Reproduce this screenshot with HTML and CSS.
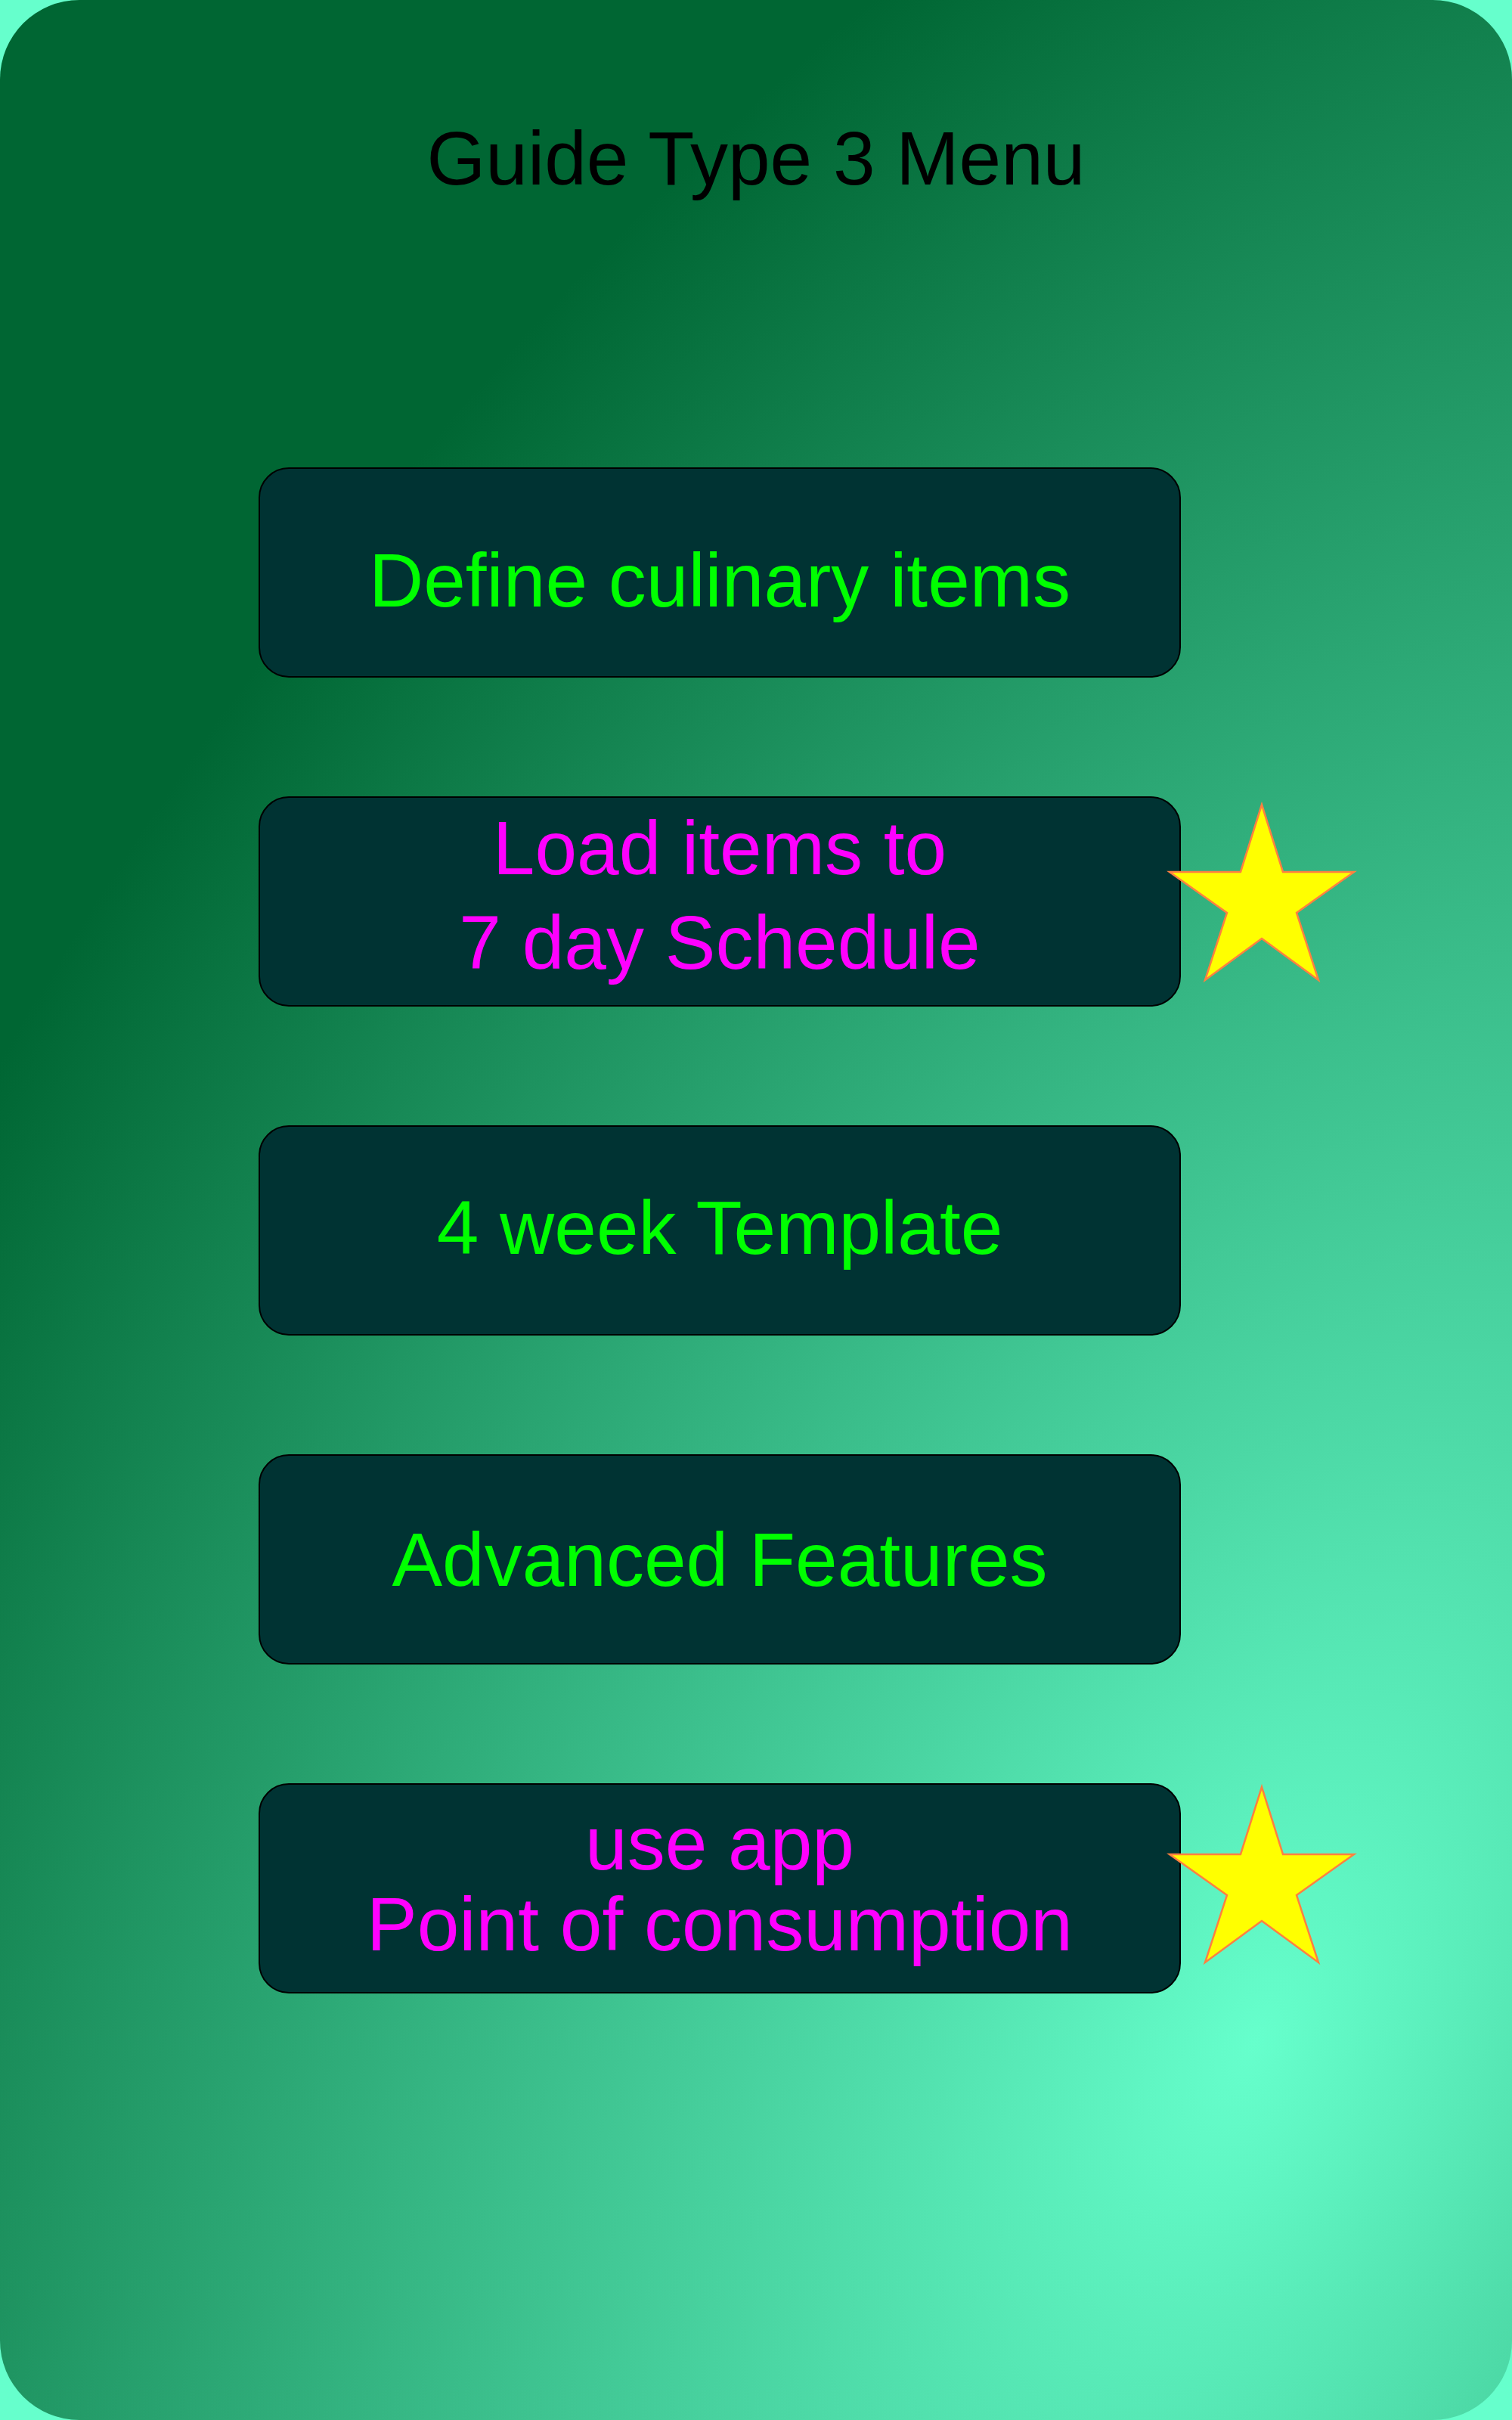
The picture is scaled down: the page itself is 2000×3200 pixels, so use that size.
FILE: index.html
```html
<!DOCTYPE html>
<html lang="en">
<head>
<meta charset="utf-8">
<title>Guide Type 3 Menu</title>
<link rel="stylesheet" href="styles.css">
</head>
<body>
<main class="card">
  <svg class="bg" viewBox="0 0 2000 3200" preserveAspectRatio="none" aria-hidden="true">
    <defs>
      <radialGradient id="glow" gradientUnits="userSpaceOnUse" cx="0" cy="0" r="1" gradientTransform="translate(1660 2700) rotate(26) scale(2077 3590)">
        <stop offset="0" stop-color="#66ffcc"/>
        <stop offset="1" stop-color="#006633"/>
      </radialGradient>
    </defs>
    <rect x="0" y="0" width="2000" height="3200" fill="url(#glow)"/>
  </svg>
  <div class="content">
    <h1 class="title">Guide Type 3 Menu</h1>
    <ul class="menu">
      <li class="item">
        <div class="btn btn--green btn--low">Define culinary items</div>
      </li>
      <li class="item">
        <div class="btn btn--magenta btn--two">Load items to<br>7 day Schedule</div>
        <svg class="star star--a" viewBox="0 0 244 232" aria-hidden="true"><polygon points="122,0 150,89 244,89 168,143 197,232 122,177 47,232 76,143 0,89 94,89"/></svg>
      </li>
      <li class="item">
        <div class="btn btn--green btn--up">4 week Template</div>
      </li>
      <li class="item">
        <div class="btn btn--green">Advanced Features</div>
      </li>
      <li class="item">
        <div class="btn btn--magenta btn--tight">use app<br>Point of consumption</div>
        <svg class="star star--b" viewBox="0 0 244 232" aria-hidden="true"><polygon points="122,0 150,89 244,89 168,143 197,232 122,177 47,232 76,143 0,89 94,89"/></svg>
      </li>
    </ul>
  </div>
</main>
</body>
</html>
```
FILE: styles.css
```css
html, body {
  margin: 0;
  padding: 0;
  background: #66ffcc;
}

.card {
  width: 2000px;
  height: 3200px;
  border-radius: 105px;
  overflow: hidden;
  display: grid;
  grid-template: 1fr / 1fr;
}

.bg,
.content {
  grid-area: 1 / 1;
}

.bg {
  display: block;
  width: 100%;
  height: 100%;
}

.content {
  padding-top: 159px;
  font-family: "Liberation Sans", Arial, sans-serif;
}

.title {
  margin: 0;
  font-size: 100px;
  line-height: 100px;
  font-weight: normal;
  text-align: center;
  color: #000;
}

.menu {
  list-style: none;
  margin: 359px 0 0 342px;
  padding: 0;
  width: 1220px;
  display: flex;
  flex-direction: column;
  gap: 157px;
}

.item {
  position: relative;
}

.btn {
  box-sizing: border-box;
  height: 278px;
  border: 2px solid #000;
  border-radius: 40px;
  background: #003333;
  display: flex;
  align-items: center;
  justify-content: center;
  text-align: center;
  font-size: 100px;
  line-height: 115px;
}

.btn--green {
  color: #00ff00;
}

.btn--magenta {
  color: #ff00ff;
}

.btn--low {
  padding-top: 20px;
}

.btn--up {
  padding-bottom: 8px;
}

.btn--two {
  line-height: 125px;
  padding-bottom: 16px;
}

.btn--tight {
  line-height: 107px;
  padding-bottom: 12px;
}

.star {
  position: absolute;
  left: 1205px;
  width: 244px;
  height: 232px;
  overflow: visible;
}

.star polygon {
  fill: #ffff00;
  stroke: #ff8040;
  stroke-width: 2.5;
  stroke-linejoin: miter;
}

.star--a {
  top: 11px;
}

.star--b {
  top: 5px;
}
```
